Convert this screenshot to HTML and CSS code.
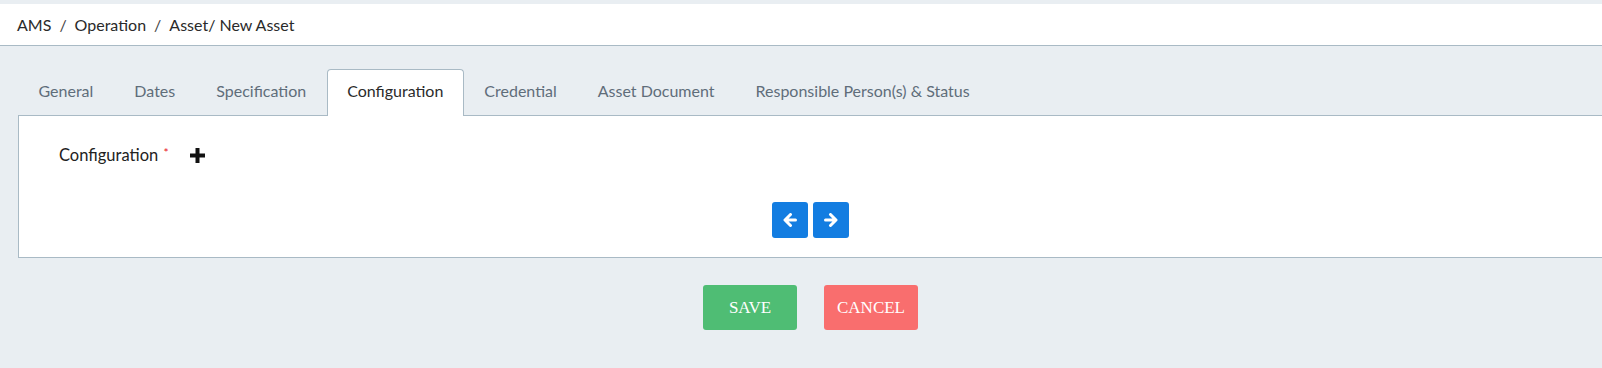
FILE: index.html
```html
<!DOCTYPE html>
<html>
<head>
  <title>New Asset</title>
  <link rel="stylesheet" href="styles.css">
</head>
<body>
  <div class="topbar">
    <span class="crumb">AMS</span>
    <span class="sep">/</span>
    <span class="crumb">Operation</span>
    <span class="sep">/</span>
    <span class="crumb">Asset/ New Asset</span>
  </div>

  <div class="content">
    <ul class="tabs">
      <li class="tab">General</li>
      <li class="tab">Dates</li>
      <li class="tab">Specification</li>
      <li class="tab active">Configuration</li>
      <li class="tab">Credential</li>
      <li class="tab">Asset Document</li>
      <li class="tab">Responsible Person(s) &amp; Status</li>
    </ul>

    <div class="panel">
      <div class="field-row">
        <label class="field-label">Configuration <span class="required">*</span></label>
        <svg class="add-icon" width="15" height="15" viewBox="0 0 15 15">
          <rect x="5.5" y="0" width="4" height="15" fill="#111"/>
          <rect x="0" y="5.5" width="15" height="4" fill="#111"/>
        </svg>
      </div>

      <div class="pager">
        <button class="pager-btn">
          <svg width="14" height="14" viewBox="0 0 14 14">
            <path d="M7.5 1.5 L2 7 L7.5 12.5 M2.5 7 H12.5" stroke="#fff" stroke-width="3" fill="none" stroke-linecap="round" stroke-linejoin="round"/>
          </svg>
        </button>
        <button class="pager-btn">
          <svg width="14" height="14" viewBox="0 0 14 14">
            <path d="M6.5 1.5 L12 7 L6.5 12.5 M11.5 7 H1.5" stroke="#fff" stroke-width="3" fill="none" stroke-linecap="round" stroke-linejoin="round"/>
          </svg>
        </button>
      </div>
    </div>

    <div class="actions">
      <button class="btn btn-save">SAVE</button>
      <button class="btn btn-cancel">CANCEL</button>
    </div>
  </div>
</body>
</html>
```

FILE: styles.css
```css
html, body {
  margin: 0;
  padding: 0;
}

body {
  background-color: #e9eef2;
  font-family: Lato, "Open Sans", sans-serif;
  overflow: hidden;
}

.topbar {
  margin-top: 4px;
  height: 41px;
  background-color: #fff;
  border-bottom: 1px solid #a9bac5;
  padding-left: 17px;
  display: flex;
  align-items: center;
  font-size: 16px;
  color: #2a2a2a;
}

.sep {
  margin: 0 8px;
  color: #444;
}

.content {
  padding: 23px 0 0 18px;
  margin-right: -1px;
}

.tabs {
  list-style: none;
  margin: 0;
  padding: 0;
  display: flex;
}

.tab {
  padding: 0 19.5px;
  height: 45px;
  line-height: 41px;
  font-size: 16px;
  color: #5f6d7a;
  border: 1px solid transparent;
  border-bottom: none;
  margin-bottom: -1px;
  cursor: pointer;
}

.tab.active {
  background-color: #fff;
  color: #2b2b2b;
  border-color: #a9bac5;
  border-radius: 4px 4px 0 0;
  height: 46px;
  position: relative;
}

.panel {
  background-color: #fff;
  border: 1px solid #a9bac5;
  padding: 29px 0 19px 40px;
}

.field-row {
  display: flex;
  align-items: center;
  height: 20px;
}

.field-label {
  font-size: 16.5px;
  color: #222;
}

.required {
  color: #e8101a;
  font-size: 12px;
  vertical-align: 4px;
  margin-left: 1px;
}

.add-icon {
  margin-left: 21px;
}

.pager {
  display: flex;
  justify-content: center;
  gap: 5px;
  margin-top: 37px;
  margin-left: -40px;
}

.pager-btn {
  width: 36px;
  height: 36px;
  border: none;
  border-radius: 3px;
  background-color: #137de1;
  display: flex;
  align-items: center;
  justify-content: center;
  padding: 0;
  cursor: pointer;
}

.actions {
  display: flex;
  justify-content: center;
  gap: 27px;
  margin-top: 27px;
}

.btn {
  width: 94px;
  height: 45px;
  border: none;
  border-radius: 3px;
  color: #fff;
  font-family: "Liberation Serif", serif;
  font-size: 17px;
  cursor: pointer;
}

.btn-save {
  background-color: #4fbd74;
}

.btn-cancel {
  background-color: #f96e6e;
}
```
